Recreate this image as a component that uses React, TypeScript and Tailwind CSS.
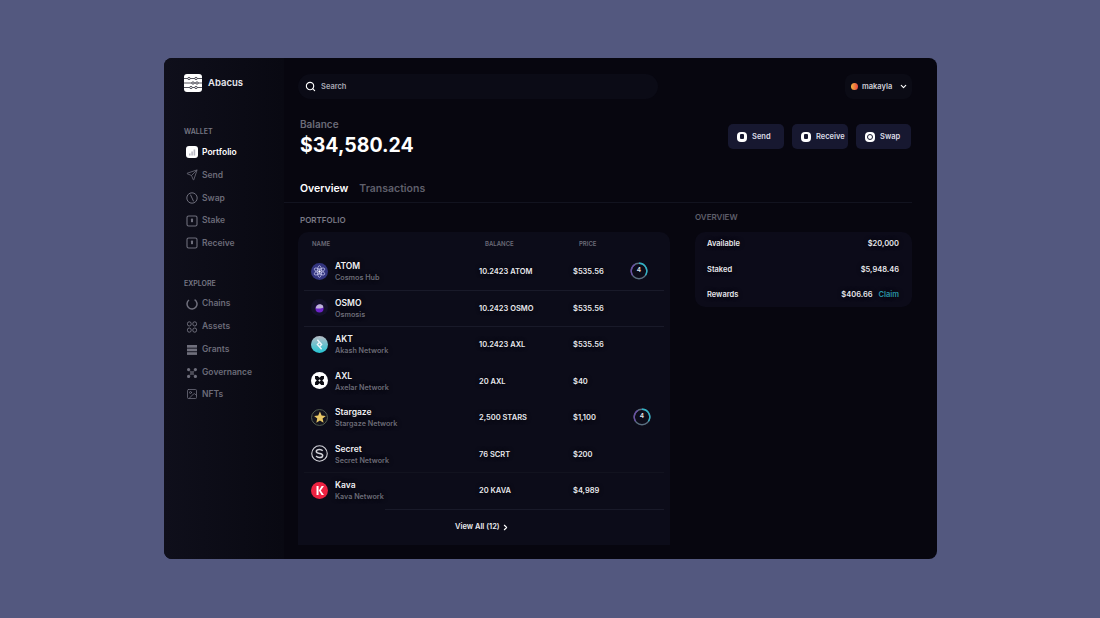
import React from 'react';
import { Search, ChevronDown, ChevronRight, Send, Image } from 'lucide-react';

const navIcon = 'w-[12px] h-[12px] text-[#6f6f7c]';
const halo = '[text-shadow:0_0_4px_rgba(0,0,0,0.9)]';
const coin = 'w-[17px] h-[17px]';

function LogoMark() {
    return (
        <div className="w-[18px] h-[18px] rounded-[3px] bg-white flex items-center justify-center">
            <svg viewBox="0 0 18 18" className="w-[18px] h-[18px]" fill="none" stroke="#2a2a36" strokeWidth="0.8">
                <path d="M0 4.5h18M0 9h18M0 13.5h18" />
                <circle cx="5" cy="4.5" r="1.2" fill="#fff" />
                <circle cx="12" cy="4.5" r="1.2" fill="#fff" />
                <circle cx="9" cy="9" r="1.2" fill="#fff" />
                <circle cx="13" cy="9" r="1.2" fill="#fff" />
                <circle cx="7" cy="13.5" r="1.2" fill="#fff" />
                <circle cx="12" cy="13.5" r="1.2" fill="#fff" />
            </svg>
        </div>
    );
}

function PortfolioIcon() {
    return (
        <svg viewBox="0 0 12 12" className="w-[12px] h-[12px]">
            <rect width="12" height="12" rx="3" fill="#fff" />
            <path d="M3 9.5h1.6V7.6H3zM5.3 9.5h1.6V5.6H5.3zM7.6 9.5h1.6V3.4H7.6z" fill="#b9b9c4" />
        </svg>
    );
}

function SwapIcon() {
    return (
        <svg viewBox="0 0 12 12" className={navIcon} fill="none" stroke="currentColor" strokeWidth="1">
            <circle cx="6" cy="6" r="5.2" />
            <path d="M4.6 3l1.4 3 1.4 3" strokeLinecap="round" />
        </svg>
    );
}

function BoxIcon() {
    return (
        <svg viewBox="0 0 12 12" className={navIcon} fill="none" stroke="currentColor" strokeWidth="1.1">
            <rect x="1" y="1" width="10" height="10" rx="1.6" />
            <rect x="5" y="3.6" width="2" height="3.6" rx="0.6" fill="currentColor" stroke="none" />
        </svg>
    );
}

function ChainsIcon() {
    return (
        <svg viewBox="0 0 12 12" className={navIcon} fill="none" stroke="currentColor" strokeWidth="1.5">
            <path d="M8.6 1.7A5 5 0 1 1 3 2" />
        </svg>
    );
}

function AssetsIcon() {
    return (
        <svg viewBox="0 0 12 12" className={navIcon} fill="none" stroke="currentColor" strokeWidth="1">
            <rect x="1.4" y="0.8" width="3.8" height="4.2" rx="1.9" />
            <rect x="6.8" y="0.8" width="3.8" height="4.2" rx="1.9" />
            <rect x="1.4" y="7" width="3.8" height="4.2" rx="1.9" />
            <rect x="6.8" y="7" width="3.8" height="4.2" rx="1.9" />
        </svg>
    );
}

function GrantsIcon() {
    return (
        <svg viewBox="0 0 12 12" className={navIcon} fill="currentColor">
            <rect x="1" y="1" width="10" height="2.7" />
            <rect x="1" y="4.6" width="10" height="2.7" />
            <rect x="1" y="8.2" width="10" height="2.7" />
        </svg>
    );
}

function GovernanceIcon() {
    return (
        <svg viewBox="0 0 12 12" className={navIcon} fill="currentColor">
            <circle cx="2.6" cy="2.6" r="1.6" />
            <circle cx="9.4" cy="2.6" r="1.6" />
            <circle cx="2.6" cy="9.4" r="1.6" />
            <circle cx="9.4" cy="9.4" r="1.6" />
            <circle cx="6" cy="6" r="1.7" />
            <path d="M3.4 4.2l.8-.8 1.8 1.8 1.8-1.8.8.8L6.8 6l1.8 1.8-.8.8L6 6.8 4.2 8.6l-.8-.8L5.2 6z" fill="#4a4a55" />
        </svg>
    );
}

type NavItem = { label: string; icon: React.ReactNode; active?: boolean; h: string };

const walletNav: NavItem[] = [
    { label: 'Portfolio', icon: <PortfolioIcon />, active: true, h: 'h-[23px]' },
    { label: 'Send', icon: <Send className={navIcon} strokeWidth={1.6} />, h: 'h-[23px]' },
    { label: 'Swap', icon: <SwapIcon />, h: 'h-[23px]' },
    { label: 'Stake', icon: <BoxIcon />, h: 'h-[22.5px]' },
    { label: 'Receive', icon: <BoxIcon />, h: 'h-[22px]' },
];

const exploreNav: NavItem[] = [
    { label: 'Chains', icon: <ChainsIcon />, h: 'h-[23px]' },
    { label: 'Assets', icon: <AssetsIcon />, h: 'h-[23px]' },
    { label: 'Grants', icon: <GrantsIcon />, h: 'h-[23px]' },
    { label: 'Governance', icon: <GovernanceIcon />, h: 'h-[23px]' },
    { label: 'NFTs', icon: <Image className={navIcon} strokeWidth={1.6} />, h: 'h-[20px]' },
];

function NavRow({ item }: { item: NavItem }) {
    return (
        <div className={`flex items-center gap-[4px] ${item.h}`}>
            <div className="w-[13px] flex justify-center">{item.icon}</div>
            <span className={`text-[8.5px] font-semibold ${item.active ? 'text-white' : 'text-[#6b6b78]'}`}>{item.label}</span>
        </div>
    );
}

function Sidebar() {
    return (
        <aside className="w-[120px] shrink-0 bg-gradient-to-r from-[#0f0f1b] to-[#090912] pl-[20px] pt-[16px]">
            <div className="flex items-center gap-[6px]">
                <LogoMark />
                <span className="mt-[1px] text-[9.5px] font-semibold text-[#e6e6ec]">Abacus</span>
            </div>
            <div className="mt-[35px] text-[7px] font-semibold text-[#777784] leading-[9px]">WALLET</div>
            <div className="mt-[4px] ml-[1px] pt-[0.5px]">
                {walletNav.map((item) => (
                    <NavRow key={item.label} item={item} />
                ))}
            </div>
            <div className="mt-[24.5px] text-[7px] font-semibold text-[#777784] leading-[9px]">EXPLORE</div>
            <div className="mt-[4px] ml-[1px] pt-[0.5px]">
                {exploreNav.map((item) => (
                    <NavRow key={item.label} item={item} />
                ))}
            </div>
        </aside>
    );
}

function AtomIcon() {
    return (
        <svg viewBox="0 0 16 16" className={coin}>
            <circle cx="8" cy="8" r="8" fill="#33357f" />
            <g fill="none" stroke="#c9c9ee" strokeWidth="0.7">
                <ellipse cx="8" cy="8" rx="5.5" ry="2" transform="rotate(30 8 8)" />
                <ellipse cx="8" cy="8" rx="5.5" ry="2" transform="rotate(90 8 8)" />
                <ellipse cx="8" cy="8" rx="5.5" ry="2" transform="rotate(150 8 8)" />
            </g>
            <circle cx="8" cy="8" r="1.1" fill="#fff" />
        </svg>
    );
}

function OsmoIcon() {
    return (
        <svg viewBox="0 0 16 16" className={coin}>
            <circle cx="8" cy="8" r="8" fill="#14122a" />
            <circle cx="8" cy="9" r="3.8" fill="#6d24c9" />
            <path d="M4.4 8.6C5 6 7 4.6 9 5c1.6.3 2.6 1.4 2.6 3-1.6 1-4.6 1.4-7.2.6z" fill="#bdb3d8" />
        </svg>
    );
}

function AktIcon() {
    return (
        <svg viewBox="0 0 16 16" className={coin}>
            <defs>
                <linearGradient id="akt" x1="0" y1="0" x2="0" y2="1">
                    <stop offset="0" stopColor="#b8bcc6" />
                    <stop offset="1" stopColor="#24c6d4" />
                </linearGradient>
            </defs>
            <circle cx="8" cy="8" r="8" fill="url(#akt)" />
            <path d="M6 3.6l4 4.4-1.6 1.6M10 12.4L6 8l1.6-1.6" fill="none" stroke="#eef6fa" strokeWidth="1.3" />
        </svg>
    );
}

function AxlIcon() {
    return (
        <svg viewBox="0 0 16 16" className={coin}>
            <circle cx="8" cy="8" r="8" fill="#fff" />
            <path d="M3.8 3.8h2.6L8 5.4l1.6-1.6h2.6v2.6L10.6 8l1.6 1.6v2.6H9.6L8 10.6l-1.6 1.6H3.8V9.6L5.4 8 3.8 6.4z" fill="#0b0b12" />
            <path d="M8 6.8L9.2 8 8 9.2 6.8 8z" fill="#fff" />
        </svg>
    );
}

function StarsIcon() {
    return (
        <svg viewBox="0 0 16 16" className={coin}>
            <circle cx="8" cy="8" r="7.5" fill="#14141e" stroke="#5f6a58" strokeWidth="0.8" />
            <path d="M8.4 2.4l1.6 3.7 3.9.4-3 2.5.9 3.9-3.4-2-3.4 2 .9-3.9-3-2.5 3.9-.4z" fill="#e8c766" />
        </svg>
    );
}

function SecretIcon() {
    return (
        <svg viewBox="0 0 16 16" className={coin} fill="none" stroke="#d4d4da">
            <circle cx="8" cy="8" r="7.3" strokeWidth="1" />
            <path d="M11 5.4C10.2 4.4 9 4.2 8 4.2c-1.8 0-3 .8-3 2 0 2.8 6 1 6 3.6 0 1.2-1.2 2-3 2-1.2 0-2.4-.4-3.2-1.4" strokeWidth="1.4" />
        </svg>
    );
}

function KavaIcon() {
    return (
        <svg viewBox="0 0 16 16" className={coin}>
            <circle cx="8" cy="8" r="8" fill="#ed2241" />
            <path d="M5.2 3.8h1.9v8.4H5.2zM10 3.8h2.2L9.2 8l3 4.2H10L7.4 8z" fill="#fff" />
        </svg>
    );
}

type Asset = {
    symbol: string;
    network: string;
    balance: string;
    price: string;
    icon: React.ReactNode;
    badge?: string;
    divider?: string;
};

const assets: Asset[] = [
    { symbol: 'ATOM', network: 'Cosmos Hub', balance: '10.2423 ATOM', price: '$535.56', icon: <AtomIcon />, badge: 'ml-[10px]', divider: 'border-[#191a29]' },
    { symbol: 'OSMO', network: 'Osmosis', balance: '10.2423 OSMO', price: '$535.56', icon: <OsmoIcon />, divider: 'border-[#191a29]' },
    { symbol: 'AKT', network: 'Akash Network', balance: '10.2423 AXL', price: '$535.56', icon: <AktIcon /> },
    { symbol: 'AXL', network: 'Axelar Network', balance: '20 AXL', price: '$40', icon: <AxlIcon /> },
    { symbol: 'Stargaze', network: 'Stargaze Network', balance: '2,500 STARS', price: '$1,100', icon: <StarsIcon />, badge: 'ml-[13px]' },
    { symbol: 'Secret', network: 'Secret Network', balance: '76 SCRT', price: '$200', icon: <SecretIcon />, divider: 'border-[#12131f]' },
    { symbol: 'Kava', network: 'Kava Network', balance: '20 KAVA', price: '$4,989', icon: <KavaIcon /> },
];

function Badge({ className }: { className: string }) {
    return (
        <div className={`relative w-[18px] h-[18px] -mt-[1px] ${className}`}>
            <svg viewBox="0 0 18 18" className="w-[18px] h-[18px]" fill="none" strokeWidth="1.4">
                <circle cx="9" cy="9" r="7.8" stroke="#5b6f80" />
                <path d="M9 1.2A7.8 7.8 0 0 1 15.5 13.3" stroke="#2fb4c6" />
                <path d="M2.5 13.3A7.8 7.8 0 0 1 4.8 2.4" stroke="#6a4fa3" />
            </svg>
            <span className="absolute inset-0 flex items-center justify-center text-[6.5px] font-semibold text-[#e4e4ea]">4</span>
        </div>
    );
}

function AssetRow({ asset }: { asset: Asset }) {
    return (
        <div className={`mx-[6px] h-[36.5px] flex items-center pl-[7px] border-b ${asset.divider ?? 'border-transparent'}`}>
            <div className="w-[24px] shrink-0 -mt-[1px]">{asset.icon}</div>
            <div className={`w-[144px] shrink-0 ${halo}`}>
                <div className="text-[8.5px] leading-[12px] font-semibold text-[#f0f0f4]">{asset.symbol}</div>
                <div className="text-[7.2px] leading-[11px] font-semibold text-[#6b6b78]">{asset.network}</div>
            </div>
            <div className={`w-[94px] shrink-0 text-[7.5px] font-semibold text-[#e8e8ee] ${halo}`}>{asset.balance}</div>
            <div className={`w-[47px] shrink-0 text-[7.5px] font-semibold text-[#e8e8ee] ${halo}`}>{asset.price}</div>
            {asset.badge && <Badge className={asset.badge} />}
        </div>
    );
}

function PortfolioTable() {
    return (
        <div className="w-[372px] h-[313px] rounded-t-[10px] bg-[#0c0c19] -ml-[2px] mt-[6.5px]">
            <div className="h-[22px] flex items-center pl-[14px] text-[6px] font-semibold text-[#6b6b78]">
                <span className="w-[173px]">NAME</span>
                <span className="w-[94px]">BALANCE</span>
                <span>PRICE</span>
            </div>
            {assets.map((asset) => (
                <AssetRow key={asset.symbol} asset={asset} />
            ))}
            <div className="ml-[87px] mr-[6px] border-t border-[#191a29] h-[36px] flex items-center gap-[1px] pl-[70px] mt-[-1px]">
                <span className="text-[7.5px] font-semibold text-[#ececf1]">View All (12)</span>
                <ChevronRight className="w-[9px] h-[9px] text-white" strokeWidth={3} />
            </div>
        </div>
    );
}

function ActionButton({ label, width, icon }: { label: string; width: string; icon: React.ReactNode }) {
    return (
        <div className={`h-[25px] ${width} rounded-[5px] bg-[#171830] flex items-center gap-[5px] pl-[9px]`}>
            <div className="w-[10px] h-[10px] rounded-[4px] bg-white flex items-center justify-center">{icon}</div>
            <span className="text-[7.5px] font-semibold text-[#dcdce6]">{label}</span>
        </div>
    );
}

function OverviewCard() {
    const rows = [
        { label: 'Available', value: '$20,000' },
        { label: 'Staked', value: '$5,948.46' },
        { label: 'Rewards', value: '$406.66', claim: true },
    ];
    return (
        <div className="mt-[9.5px] w-[217px] h-[75px] rounded-[10px] bg-[#0c0b19] pl-[12px] pr-[13px] flex flex-col justify-center gap-[12.5px]">
            {rows.map((row) => (
                <div key={row.label} className={`flex items-center justify-between h-[13px] text-[7.5px] font-semibold text-[#e8e8ee] ${halo}`}>
                    <span>{row.label}</span>
                    <span className="flex gap-[6px]">
                        {row.value}
                        {row.claim && <span className="text-[#2a94a8]">Claim</span>}
                    </span>
                </div>
            ))}
        </div>
    );
}

function Main() {
    return (
        <main className="flex-1 min-w-0 pt-[16px] pr-[25px]">
            <div className="flex items-start justify-between pl-[14px]">
                <div className="w-[360px] h-[25px] rounded-full bg-[#0b0b16] flex items-center gap-[5px] pl-[7px]">
                    <Search className="w-[11px] h-[11px] text-white" strokeWidth={2.5} />
                    <span className="text-[7.5px] font-semibold text-[#a9a9b5]">Search</span>
                </div>
                <div className="w-[67px] h-[25px] rounded-[8px] bg-[#0b0b15] flex items-center pl-[6px]">
                    <div className="w-[7px] h-[7px] rounded-full bg-gradient-to-r from-[#f2b33d] to-[#e8403f]" />
                    <span className="ml-[4px] text-[7.5px] font-semibold text-[#cfcfd8]">makayla</span>
                    <ChevronDown className="ml-[7px] w-[9px] h-[9px] text-white" strokeWidth={3} />
                </div>
            </div>

            <div className="flex items-start justify-between pl-[16px] mt-[18px]">
                <div>
                    <div className="text-[10px] leading-[14px] font-semibold text-[#6b6b78]">Balance</div>
                    <div className="mt-[1px] text-[19.5px] leading-[26px] font-bold text-white">$34,580.24</div>
                </div>
                <div className="flex gap-[8px] mt-[7px] mr-[1px]">
                    <ActionButton label="Send" width="w-[56px]" icon={<span className="w-[4px] h-[5px] rounded-[1px] bg-[#171830]" />} />
                    <ActionButton label="Receive" width="w-[56px]" icon={<span className="w-[4px] h-[5px] rounded-[1px] bg-[#171830]" />} />
                    <ActionButton label="Swap" width="w-[55px]" icon={<span className="w-[6px] h-[6px] rounded-full border border-[#171830]" />} />
                </div>
            </div>

            <div className="mt-[23px] border-b border-[#12131f] h-[22px] pl-[16px] flex gap-[11px] text-[10.5px] font-semibold leading-[15px]">
                <span className="text-white">Overview</span>
                <span className="text-[#5f5f6b]">Transactions</span>
            </div>

            <div className="flex pl-[16px] mt-[2px]">
                <section className="w-[395px] pt-[9.5px]">
                    <div className="text-[8px] leading-[11px] font-semibold text-[#7a7a86]">PORTFOLIO</div>
                    <PortfolioTable />
                </section>
                <section className="pt-[6.5px]">
                    <div className="text-[8px] leading-[11px] font-semibold text-[#5f5f6b]">OVERVIEW</div>
                    <OverviewCard />
                </section>
            </div>
        </main>
    );
}

export default function App() {
    return (
        <div className="w-[1100px] h-[618px] overflow-hidden bg-[#53587f] pt-[58px] pl-[164px]" style={{ fontFamily: 'Inter, sans-serif' }}>
            <div className="w-[773px] h-[501px] rounded-[8px] overflow-hidden bg-[#07060f] flex">
                <Sidebar />
                <Main />
            </div>
        </div>
    );
}
